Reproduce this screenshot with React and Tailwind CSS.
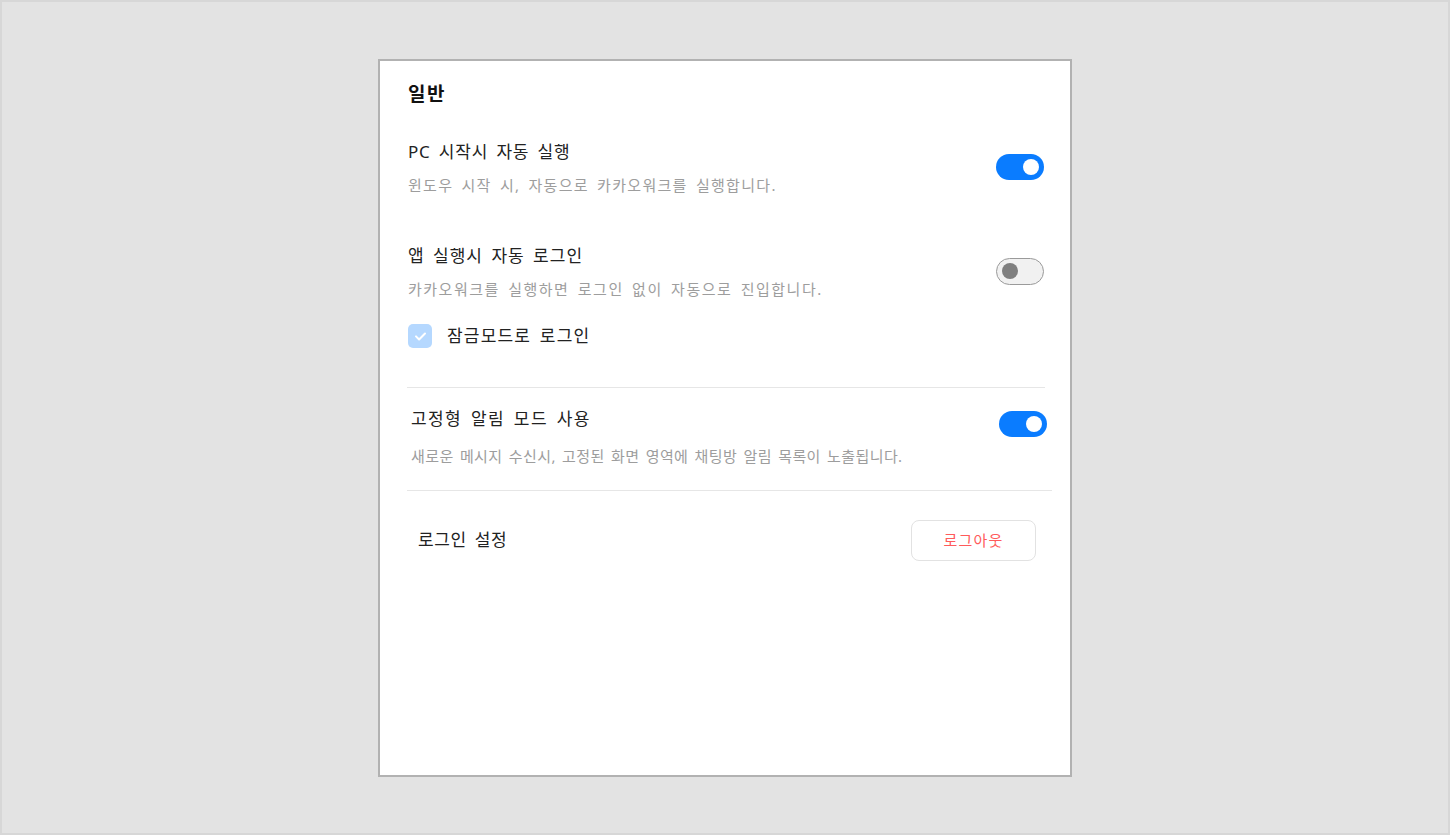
import React, { useState } from 'react'

const font = { fontFamily: '"Noto Sans", "Noto Sans CJK KR", sans-serif' }

function Toggle({ on, onChange }) {
    if (on) {
        return (
            <button
                onClick={onChange}
                className="flex h-[26px] w-[48px] shrink-0 items-center justify-end rounded-full bg-[#0a7cff] pr-[5px]"
            >
                <span className="block h-[16px] w-[16px] rounded-full bg-white" />
            </button>
        )
    }
    return (
        <button
            onClick={onChange}
            className="flex h-[27px] w-[48px] shrink-0 items-center justify-start rounded-full border-[1.5px] border-[#9a9a9a] bg-[#f1f1f1] pl-[4.5px]"
        >
            <span className="block h-[16px] w-[16px] rounded-full bg-[#7f7f7f]" />
        </button>
    )
}

export default function App() {
    const [autoStart, setAutoStart] = useState(true)
    const [autoLogin, setAutoLogin] = useState(false)
    const [lockMode, setLockMode] = useState(true)
    const [fixedAlert, setFixedAlert] = useState(true)

    return (
        <div style={font} className="flex h-[835px] w-full items-center justify-center border-2 border-[#d7d7d7] bg-[#e3e3e3]">
            <div className="flex h-[718px] w-[694px] flex-col border-2 border-[#b2b2b2] bg-white pl-[28px] pr-[26px] pt-[20px]">
                <h1 className="text-[19px] font-bold leading-[26px] tracking-[1.5px] text-[#111]">일반</h1>

                {/* PC 시작시 자동 실행 */}
                <div className="mt-[33px] flex items-center justify-between">
                    <div>
                        <p className="text-[17px] leading-[24px] tracking-[0.8px] text-[#222] [word-spacing:3px]">PC 시작시 자동 실행</p>
                        <p className="mt-[11px] text-[15px] leading-[20px] tracking-[1.3px] text-[#9d9d9d] [word-spacing:3px]">윈도우 시작 시, 자동으로 카카오워크를 실행합니다.</p>
                    </div>
                    <Toggle on={autoStart} onChange={() => setAutoStart(!autoStart)} />
                </div>

                {/* 앱 실행시 자동 로그인 */}
                <div className="mt-[49px] flex items-center justify-between">
                    <div>
                        <p className="text-[17px] leading-[24px] tracking-[1px] text-[#222] [word-spacing:3px]">앱 실행시 자동 로그인</p>
                        <p className="mt-[11px] text-[15px] leading-[20px] tracking-[1.5px] text-[#9d9d9d] [word-spacing:3px]">카카오워크를 실행하면 로그인 없이 자동으로 진입합니다.</p>
                    </div>
                    <Toggle on={autoLogin} onChange={() => setAutoLogin(!autoLogin)} />
                </div>

                <label className="mt-[25px] flex items-center gap-[15px]">
                    <button
                        onClick={() => setLockMode(!lockMode)}
                        className="flex h-[24px] w-[24px] items-center justify-center rounded-[5px] bg-[#b5d8ff]"
                    >
                        {lockMode && (
                            <svg width="24" height="24" viewBox="0 0 24 24" fill="none">
                                <path d="M8 12.4l3.1 3.1 5.9-6" stroke="white" strokeWidth="2" strokeLinecap="round" strokeLinejoin="round" />
                            </svg>
                        )}
                    </button>
                    <span className="text-[17px] leading-[24px] tracking-[1.2px] text-[#222] [word-spacing:3px]">잠금모드로 로그인</span>
                </label>

                <div className="mt-[39px] mr-[-1px] ml-[-1px] h-px bg-[#e6e6e6]" />

                {/* 고정형 알림 모드 사용 */}
                <div className="mt-[19px] mr-[-3px] flex items-start justify-between pl-[3px]">
                    <div>
                        <p className="text-[17px] leading-[24px] tracking-[1.4px] text-[#222] [word-spacing:3px]">고정형 알림 모드 사용</p>
                        <p className="mt-[15px] text-[15px] leading-[20px] tracking-[0.4px] text-[#9d9d9d] [word-spacing:2px]">새로운 메시지 수신시, 고정된 화면 영역에 채팅방 알림 목록이 노출됩니다.</p>
                    </div>
                    <div className="mt-[4px]">
                        <Toggle on={fixedAlert} onChange={() => setFixedAlert(!fixedAlert)} />
                    </div>
                </div>

                <div className="mt-[24px] mr-[-8px] ml-[-1px] h-px bg-[#e6e6e6]" />

                {/* 로그인 설정 */}
                <div className="mt-[29px] flex items-center justify-between pl-[10px] pr-[8px]">
                    <span className="text-[17px] leading-[24px] tracking-[0.6px] text-[#222] [word-spacing:3px]">로그인 설정</span>
                    <button className="h-[41px] w-[125px] rounded-[8px] border border-[#e2e2e2] bg-white text-[15px] tracking-[1.2px] text-[#ff5b5b]">
                        로그아웃
                    </button>
                </div>
            </div>
        </div>
    )
}
